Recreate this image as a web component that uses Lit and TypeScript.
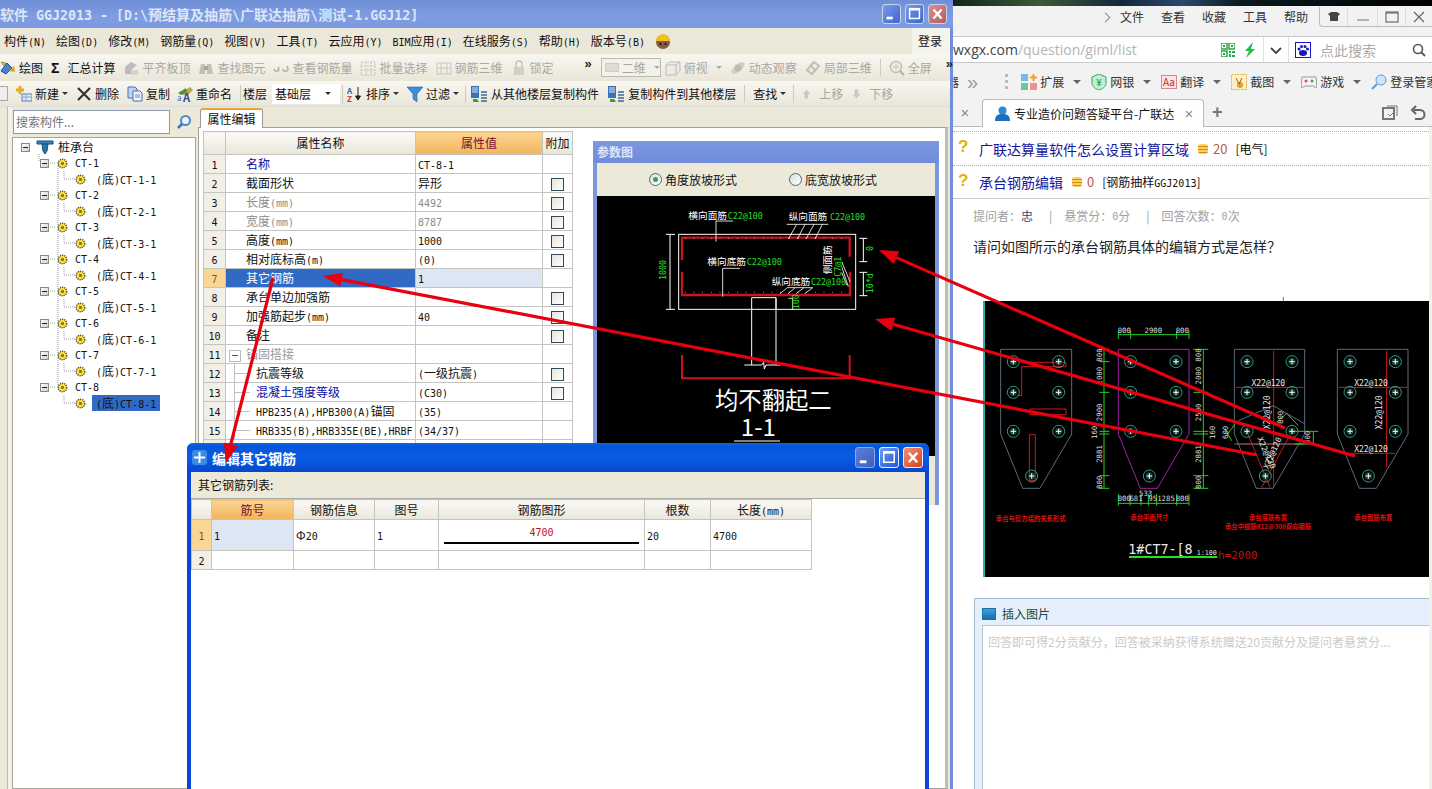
import { LitElement, html, css, svg } from "lit";
import { customElement } from "lit/decorators.js";

const t = (text: string) =>
  text.split(/([\x00-\x7f]+)/).map((s, i) => (i % 2 ? html`<span class="m">${s}</span>` : s));

const I: Record<string, any> = {
  draw: html`<svg class="i" viewBox="0 0 16 16"><path d="M1 11 7 3l5 5-6 6z" fill="#4a7fd0" stroke="#24508f"/><path d="M4 6 1 2l5 1z" fill="#e8c030" stroke="#806010" stroke-width=".6"/><path d="M9 11l5-5 1 6z" fill="#e8a020"/></svg>`,
  align: html`<svg class="i" viewBox="0 0 16 16"><path d="M2 14V7l6-5 6 3-5 4v5z" fill="#bbb"/><rect x="8" y="10" width="7" height="5" fill="#d4d4d0"/></svg>`,
  find: html`<svg class="i" viewBox="0 0 16 16"><path d="M1 14 3 4h4v10zM9 14V4h4l2 10z" fill="#c4c0b0"/><rect x="6" y="6" width="4" height="4" fill="#a8a498"/></svg>`,
  view: html`<svg class="i" viewBox="0 0 16 16"><path d="M1 9c0 3 5 3 5 0M6 7l-1 3M10 9c0 3 5 3 5 0l-1-3" fill="none" stroke="#b4b4ac" stroke-width="1.6"/></svg>`,
  batch: html`<svg class="i" viewBox="0 0 16 16"><path d="M1 2h14v13H1zM1 6h14M1 10h14M6 2v13M11 2v13" fill="none" stroke="#c4c4bc" stroke-dasharray="2 1"/></svg>`,
  three: html`<svg class="i" viewBox="0 0 16 16"><path d="M1 3h14v11H1zM1 8h14M5 3v11M11 3v11" fill="none" stroke="#c8c8c0"/></svg>`,
  lock: html`<svg class="i" viewBox="0 0 16 16"><path d="M5 7V4a3 3 0 0 1 6 0v3" fill="none" stroke="#c0c0b8" stroke-width="1.4"/><rect x="3" y="7" width="10" height="8" fill="#d0d0c8"/></svg>`,
  cube: html`<svg class="i" viewBox="0 0 16 16"><path d="M1 5l4-3h10v9l-4 4H1zM1 5h10v10M11 5l4-3" fill="#ecebe4" stroke="#bdbdb4"/></svg>`,
  orbit: html`<svg class="i" viewBox="0 0 16 16"><ellipse cx="8" cy="8" rx="8" ry="3.6" transform="rotate(-40 8 8)" fill="#d0d0c4"/><circle cx="8" cy="8" r="3.4" fill="#bcbcb0"/></svg>`,
  local: html`<svg class="i" viewBox="0 0 16 16"><path d="M2 10 9 2l5 4-7 8z" fill="none" stroke="#c0c0b6" stroke-width="2"/><path d="M5 5l6 6" stroke="#c0c0b6" stroke-width="2"/></svg>`,
  zoom: html`<svg class="i" viewBox="0 0 16 16"><circle cx="7" cy="7" r="5.5" fill="#eeeee6" stroke="#bcbcb0" stroke-width="1.4"/><path d="M4 7h6M7 4v6" stroke="#c0c0b6"/><path d="M11 11l4 4" stroke="#b0b0a6" stroke-width="2"/></svg>`,
  add: html`<svg class="i" viewBox="0 0 16 16"><rect x="6" y="8" width="10" height="7" fill="#dfe9f6" stroke="#5a80b8"/><path d="M6 11h10M10 8v7" stroke="#8aa8d0"/><path d="M4 0v8M0 4h8" stroke="#e0b020" stroke-width="3"/></svg>`,
  del: html`<svg class="i" viewBox="0 0 16 16"><path d="M2 2l12 12M14 2 2 14" stroke="#333" stroke-width="2.2"/></svg>`,
  copy: html`<svg class="i" viewBox="0 0 16 16"><path d="M1 1h7l2 2v9H1z" fill="#bcd4f0" stroke="#4a70b0"/><path d="M6 5h7l2 2v8H6z" fill="#eef4fc" stroke="#4a70b0"/><path d="M8 9h5M8 11h5" stroke="#6a8ac0"/></svg>`,
  rename: html`<svg class="i" viewBox="0 0 16 16"><path d="M3 8 13 1l3 3-6 6z" fill="#c8a040"/><path d="M1 7 9 2l1 4-6 3z" fill="#4a9050"/><text x="0" y="15" font-size="8" fill="#3a6ab0" font-family="Liberation Sans">a</text><text x="6" y="15.500" font-size="11" font-weight="700" fill="#2a50a0" font-family="Liberation Sans">A</text></svg>`,
  az: html`<svg class="i" viewBox="0 0 16 16"><text x="0" y="7.500" font-size="8" font-weight="700" fill="#2a60b8" font-family="Liberation Sans">A</text><text x="0" y="15.500" font-size="8" font-weight="700" fill="#c04030" font-family="Liberation Sans">Z</text><path d="M11 1v12M8.500 10l2.500 4 2.500-4z" stroke="#222" fill="#222"/></svg>`,
  filter: html`<svg class="i" viewBox="0 0 16 16"><path d="M0 1h16l-6 7v8l-4-3V8z" fill="#3a90d8" stroke="#2468a8" stroke-width=".6"/></svg>`,
  cpfrom: html`<svg class="i i-w" viewBox="0 0 18 17"><rect x="1" y="1" width="8" height="12" fill="#3a70b8"/><path d="M2 3h6M2 5h6M2 7h6" stroke="#dfe9f6"/><path d="M11 7h6M11 10h6M11 13h6M11 16h6" stroke="#3a6a98" stroke-width="1.6"/><path d="M3 14h4l2 3H3z" fill="#30a040"/></svg>`,
  up: html`<svg class="i i-sm" viewBox="0 0 10 12"><path d="M5 1 1 6h2v5h4V6h2z" fill="#ccc8bc"/></svg>`,
  down: html`<svg class="i i-sm" viewBox="0 0 10 12"><path d="M5 11 1 6h2V1h4v5h2z" fill="#ccc8bc"/></svg>`,
};

const gear = html`<svg class="gear" viewBox="0 0 12 12"><circle cx="6" cy="6" r="4.600" fill="#ffe93a" stroke="#444" stroke-width="1.600" stroke-dasharray="1.300 1"/><circle cx="6" cy="6" r="1.800" fill="#8a7a10"/></svg>`;
const exp = html`<span class="exp"></span>`;

const cadDim = (x: number, y: number, label: string, rot = false, col = "#dddddd") =>
  rot
    ? svg`<text x=${x} y=${y} fill=${col} font-size="22" text-anchor="middle" transform="rotate(-90 ${x} ${y})" class="cm">${label}</text>`
    : svg`<text x=${x} y=${y} fill=${col} font-size="22" text-anchor="middle" class="cm">${label}</text>`;

const pile = (x: number, y: number) => svg`
  <circle cx=${x} cy=${y} r="18" fill="none" stroke="#2f9d86" stroke-width="3"/>
  <circle cx=${x} cy=${y} r="11" fill="#1b3d36"/>
  <path d="M${x - 8} ${y}h16M${x} ${y - 8}v16" stroke="#fff" stroke-width="3"/>`;

const pileSet = (a: number, b: number, c: number) =>
  [[a, 203], [b, 203], [a, 295], [b, 295], [a, 412], [b, 412], [c, 546]].map(([x, y]) => pile(x, y));

const outline = (x0: number, w: number, col: string) =>
  svg`<path d="M${x0} 166H${x0 + w}V420L${x0 + w - 95} 583H${x0 + 66}L${x0} 420Z" fill="none" stroke=${col} stroke-width="3"/>`;

const arrow = (x1: number, y1: number, x2: number, y2: number) => {
  const a = Math.atan2(y2 - y1, x2 - x1);
  const L = 19, W = 7;
  const bx = x2 - L * Math.cos(a), by = y2 - L * Math.sin(a);
  const px = W * Math.sin(a), py = -W * Math.cos(a);
  return svg`<line x1=${x1} y1=${y1} x2=${bx} y2=${by} stroke="#e8000e" stroke-width="3.200"/>
    <polygon points="${x2},${y2} ${bx + px},${by + py} ${bx - px},${by - py}" fill="#e8000e"/>`;
};

const winBtns = (cls: string) => html`
  <div class="wbtns ${cls}">
    <span class="wb"><svg viewBox="0 0 19 20"><rect x="4" y="13" width="7" height="3" fill="#fff"/></svg></span>
    <span class="wb"><svg viewBox="0 0 19 20"><rect x="4" y="4" width="11" height="11" fill="none" stroke="#fff" stroke-width="1.600"/><rect x="4" y="3.500" width="11" height="2.500" fill="#fff"/></svg></span>
    <span class="wb close"><svg viewBox="0 0 19 20"><path d="M5 5l9 10M14 5 5 15" stroke="#fff" stroke-width="2.600"/></svg></span>
  </div>`;

@customElement("app-root")
export class AppRoot extends LitElement {
  static styles = css`
    :host { display: block; width: 1432px; height: 789px; overflow: hidden; }
    * { box-sizing: border-box; }
    .desk { position: relative; width: 1432px; height: 789px; overflow: hidden; background: #fff;
      font: 12px/16px "Noto Sans CJK SC", "Liberation Sans", sans-serif; color: #111; white-space: nowrap; }
    .m { font: 10px "DejaVu Sans Mono", monospace; white-space: pre; }
    .i { width: 16px; height: 16px; flex: none; display: block; }
    .i-sm { width: 9px; height: 12px; }
    .i-w { width: 18px; height: 17px; }
    .gap2 { width: 2px; flex: none; } .gap4 { width: 4px; flex: none; } .gap6 { width: 6px; flex: none; }
    .gap7 { width: 7px; flex: none; } .gap8 { width: 8px; flex: none; } .gap9 { width: 9px; flex: none; }

    /* main window */
    .main { position: absolute; left: 0; top: 0; width: 953px; height: 789px; display: flex; flex-direction: column;
      background: #ece9d8; border-right: 3px solid #6f8edb; }
    .title { height: 28px; flex: none; display: flex; align-items: center;
      background: linear-gradient(#6e8ed6, #7f9de2 60%, #7b99e0); color: #dde5f6; font-weight: 700; font-size: 14px; margin-right: -3px; padding-right: 6px; }
    .title .m { font: 700 13.300px "DejaVu Sans Mono", monospace; }
    .wbtns { display: flex; gap: 4px; margin-left: auto; }
    .wb { width: 19px; height: 20px; display: block; border: 1px solid #c8d4f0; border-radius: 3px;
      background: linear-gradient(135deg, #7c9ae8, #3a66d0); }
    .wb svg { width: 100%; height: 100%; display: block; }
    .wb.close { background: linear-gradient(135deg, #d99090, #b85a5a); }
    .wbtns.hot .wb { border-color: #e8eefc; width: 20px; height: 21px; background: linear-gradient(135deg, #6f9cf0, #2257d8); }
    .wbtns.hot .wb:first-child { background: linear-gradient(135deg, #5c80d8, #3c60c0); border-color: #8ca8e8; }
    .wbtns.hot .wb.close { background: linear-gradient(135deg, #f09070, #d84020); }
    .menu { height: 26px; flex: none; display: flex; align-items: center; gap: 10px; padding-left: 4px; background: #ebe8d9; }
    .hat { width: 16px; height: 16px; flex: none; }
    .login { margin-left: auto; align-self: stretch; display: flex; align-items: center; background: #f4f3ec; padding: 0 8px 0 6px; }
    .tb { display: flex; align-items: center; flex: none; background: linear-gradient(#f8f7f1, #e9e6d8); }
    .tb1 { height: 27px; gap: 8px; color: #aaa89e; }
    .tb1 .on { color: #111; }
    .tb2 { height: 26px; border-bottom: 1px solid #ddd; }
    .tool { display: flex; align-items: center; gap: 3px; }
    .sigma { font: 700 14px "Liberation Sans", sans-serif; width: 10px; text-align: center; color: #111; }
    .more { font: 700 13px/13px "Liberation Sans", sans-serif; color: #222; padding-bottom: 8px; }
    .more.first { margin-left: 23px; }
    .more.last { margin-left: 6px; }
    .combo { width: 62px; height: 19px; border: 1px solid #bdbbb0; background: #f2f1ea; display: flex; align-items: center; padding-left: 3px; gap: 3px; color: #aaa89e; margin: 0 -4px 0 1px; }
    .combo i { width: 14px; height: 9px; background: #dedcd0; border: 1px solid #ccc; }
    .caret { width: 0; height: 0; border: 3px solid transparent; border-top: 3px solid #333; border-bottom: 0; flex: none; }
    .caret.dim { border-top-color: #aaa; }
    .combo .caret, .tb1 .tool .caret { margin-left: 5px; }
    .sep { width: 1px; height: 18px; background: #cfccbd; flex: none; }
    .tb2 .tool { color: #111; }
    .tb2 .tool.gray { color: #a8a69c; }
    .collapse { width: 8px; height: 15px; border: 1px solid #aaa; border-left: 0; background: #eee; margin-right: 8px; flex: none; }
    .floor { width: 68px; height: 20px; background: #fff; display: flex; align-items: center; padding-left: 3px; margin: 0 2px 0 5px; }
    .floor .caret { margin-left: auto; margin-right: 9px; }

    .body { flex: 1; display: flex; min-height: 0; }
    .strip { width: 12px; flex: none; border-left: 0; background: linear-gradient(90deg, #ece9d8 7px, #bbb 7px, #bbb 8px, #f3f1e8 8px); }
    .side { width: 184px; flex: none; display: flex; flex-direction: column; }
    .search { height: 30px; display: flex; align-items: center; gap: 6px; padding-left: 1px; }
    .search .box { width: 157px; height: 24px; border: 1px solid #8b9bae; background: #fff; color: #777; padding-left: 2px; display: flex; align-items: center; }
    .search svg { width: 16px; height: 16px; }
    .tree { flex: 1; position: relative; background: #fff; border: 1px solid #a5a5a0; padding-top: 1px; }
    .lines { position: absolute; left: 0; top: 0; width: 182px; height: 300px; }
    .node { height: 16px; display: flex; align-items: center; position: relative; }
    .exp { width: 9px; height: 9px; border: 1px solid #888; background: linear-gradient(135deg, #fff, #cfcfc4); position: relative; flex: none; display: block; }
    .exp::after { content: ""; position: absolute; left: 1px; right: 1px; top: 3px; height: 1px; background: #222; }
    .node.root { padding-left: 8px; }
    .node.root svg { width: 18px; height: 15px; margin: 0 4px 0 6px; flex: none; }
    .node.l1 { padding-left: 27px; }
    .gear { width: 11px; height: 11px; flex: none; display: block; }
    .node.l1 .gear { margin: 0 7px 0 8px; }
    .node.l2 { padding-left: 62px; }
    .node.l2 .lab { margin-left: 6px; padding: 0 4px; height: 16px; line-height: 16px; }
    .node.sel .lab { background: #316ac5; color: #111; }

    .pane { flex: 1; display: flex; flex-direction: column; margin-left: 2px; min-width: 0; }
    .tabs { height: 20px; flex: none; padding-left: 2px; display: flex; align-items: flex-end; }
    .tab { height: 20px; width: 63px; background: #fff; border: 1px solid #9a9a90; border-top: 2px solid #f0a030; border-bottom: 0; border-radius: 3px 3px 0 0; display: flex; align-items: center; justify-content: center; position: relative; z-index: 1; margin-bottom: -1px; }
    .paneBody { flex: 1; background: #fff; border: 1px solid #a0a098; border-right: 3px solid #bdbdb4; margin-right: 2px; padding: 3px 0 0 4px; }
    table { border-collapse: collapse; table-layout: fixed; background: #fff; }
    td, th { border: 1px solid #c4c4c0; padding: 0; font-weight: 400; overflow: hidden; }
    .props { width: 370px; }
    .props th, .gridT th { background: linear-gradient(#fbfaf6, #e9e6d9); }
    .props th.act, .gridT th.act { background: linear-gradient(#fbd594, #f2b45a); color: #7a1030; }
    .props tr { height: 19px; }
    .props tr.hd { height: 23px; }
    .props th:nth-child(1) { width: 22px; } .props th:nth-child(2) { width: 190px; }
    .props th:nth-child(3) { width: 127px; } .props th:nth-child(4) { width: 30px; }
    td.n { background: #f1efe6; text-align: center; }
    td.n.on { background: #fbd594; color: #9a4a10; }
    td.k { padding-left: 20px; }
    td.k.sub { padding-left: 30px; position: relative; }
    td.k.sub::before { content: ""; position: absolute; left: 8px; width: 16px; top: 9px; height: 1px; background: #c0c0c0; }
    td.k.sub::after { content: ""; position: absolute; left: 8px; width: 1px; top: -1px; bottom: -1px; background: #c0c0c0; }
    td.k.group { padding-left: 3px; color: #999; }
    td.k.group .box { display: inline-block; vertical-align: middle; width: 12px; height: 12px; border: 1px solid #bbb; margin-right: 5px; position: relative; }
    td.k.group .box::after { content: ""; position: absolute; left: 2px; right: 2px; top: 4px; height: 1px; background: #555; }
    td.v { padding-left: 2px; }
    .blue { color: #0a0aa8; }
    .gray { color: #8c8c8c; }
    td.k.selK { background: #316ac5; color: #fff; }
    td.v.selV { background: #dde7f4; }
    td.c { text-align: center; }
    .chk { display: inline-block; width: 13px; height: 13px; border: 1px solid #2f4a58; background: linear-gradient(135deg, #e4e4dc, #fff); vertical-align: middle; }

    /* parameter window */
    .param { position: absolute; left: 593px; top: 141px; width: 346px; height: 364px; display: flex; flex-direction: column;
      background: #7b97de; padding: 0 4px 0 4px; }
    .ptitle { height: 22px; flex: none; color: #dfe6f6; font-weight: 700; display: flex; align-items: center; background: linear-gradient(#7c98e0, #6e8cd8); margin: 0 -4px; padding-left: 4px; }
    .popts { height: 33px; flex: none; background: #ece9d8; display: flex; align-items: center; justify-content: flex-start; padding-left: 52px; }
    .radio { width: 13px; height: 13px; border-radius: 50%; border: 1px solid #4a6a80; background: linear-gradient(135deg, #ddd, #fff); flex: none; position: relative; margin-right: 3px; }
    .radio.on::after { content: ""; position: absolute; left: 3px; top: 3px; width: 5px; height: 5px; border-radius: 50%; background: #45a045; }
    .popts .gap { width: 52px; }
    .pdraw { width: 338px; height: 260px; display: block; background: #000; flex: none; }
    .prest { flex: 1; background: #ece9d8; }
    svg text { font-family: "Noto Sans CJK SC", sans-serif; }
    svg text.cm { font-family: "DejaVu Sans Mono", monospace; }

    /* dialog */
    .dlg { position: absolute; left: 187px; top: 443px; width: 742px; height: 346px; display: flex; flex-direction: column;
      background: #0848d8; padding: 0 4px; border-radius: 6px 6px 0 0; }
    .dtitle { height: 29px; flex: none; display: flex; align-items: center; margin: 0 -4px; padding: 0 6px 0 5px; gap: 5px; color: #fff; font-weight: 700; font-size: 14px;
      border-radius: 6px 6px 0 0; background: linear-gradient(#0a68ea, #0455d8 12%, #0a5ce4 50%, #0448cc); }
    .dtitle .ico { width: 15px; height: 15px; flex: none; }
    .dbar { height: 27px; flex: none; background: #ece9d8; border-bottom: 1px solid #aaa; display: flex; align-items: center; padding-left: 7px; }
    .dbody { flex: 1; background: #fff; }
    .gridT { width: 620px; }
    .gridT tr.hd { height: 20px; }
    .gridT tr.r1 { height: 31px; }
    .gridT tr.r2 { height: 19px; }
    .gridT th:nth-child(1) { width: 20px; } .gridT th:nth-child(2) { width: 82px; }
    .gridT th:nth-child(3) { width: 81px; } .gridT th:nth-child(4) { width: 64px; }
    .gridT th:nth-child(5) { width: 206px; } .gridT th:nth-child(6) { width: 66px; }
    .gridT th:nth-child(7) { width: 101px; }
    .gridT td.v { padding-left: 2px; }
    .gridT .act2 { background: #dde7f4; }
    .shape { height: 30px; display: flex; flex-direction: column; align-items: center; padding: 0 5px; }
    .shape .len { color: #c01020; height: 22px; line-height: 22px; }
    .shape .bar { height: 2px; background: #000; align-self: stretch; }

    /* browser */
    .br { position: absolute; left: 953px; top: 0; width: 479px; height: 789px; display: flex; flex-direction: column; background: #fff; }
    .wall { height: 6px; flex: none; background: linear-gradient(90deg, #12241a, #3a5a38 18%, #14283c 35%, #2a4a6a 48%, #0a1a20 60%, #000 100%); }
    .bmenu { height: 30px; flex: none; background: #f2f2f2; display: flex; align-items: flex-start; }
    .bmenu .labs { display: flex; gap: 17px; margin: 0 11px 0 11px; color: #333; height: 22px; align-items: center; }
    .bmenu .arr { width: 7px; height: 7px; border-top: 1px solid #888; border-right: 1px solid #888; transform: rotate(45deg); margin: 8px 0 0 149px; flex: none; }
    .bwin { display: flex; height: 20px; border: 1px solid #bbb; border-top: 0; border-right: 0; border-radius: 0 0 0 4px; margin-top: 1px; flex: 1; }
    .bwin span { display: flex; align-items: center; justify-content: center; border-right: 1px solid #ddd; }
    .bwin span:nth-child(1) { width: 28px; } .bwin span:nth-child(2) { width: 30px; } .bwin span:nth-child(3) { width: 28px; }
    .bwin span:nth-child(4) { flex: 1; border: 0; }
    .bwin svg { width: 14px; height: 14px; display: block; }
    .baddr { height: 27px; flex: none; display: flex; align-items: center; background: #fff; border-top: 1px solid #c8c8c8; border-bottom: 1px solid #c8c8c8; }
    .url { font: 14px "Open Sans", "Liberation Sans", sans-serif; color: #444; }
    .url em { font-style: normal; color: #b4b4b4; }
    .baddr .qr { width: 14px; height: 14px; margin-left: auto; flex: none; }
    .baddr .bolt { width: 14px; height: 16px; margin: 0 6px 0 8px; flex: none; }
    .vline { width: 1px; align-self: stretch; background: #e0e0e0; flex: none; }
    .chev { width: 14px; height: 14px; margin: 0 5px; flex: none; }
    .paw { width: 16px; height: 16px; margin: 0 2px 0 6px; flex: none; }
    .srch { color: #aaa; font-size: 14px; width: 92px; margin-left: 7px; }
    .mag { width: 14px; height: 14px; margin-right: 6px; flex: none; }
    .btool { height: 37px; flex: none; background: #f2f2f2; display: flex; align-items: center; color: #333; overflow: hidden; }
    .bcut { width: 6px; overflow: hidden; direction: rtl; flex: none; }
    .chevs { color: #999; margin-left: 8px; font: 20px/20px "Liberation Sans", sans-serif; }
    .grip { width: 3px; height: 16px; margin: 0 13px 0 27px; background: repeating-linear-gradient(#bbb 0 3px, transparent 3px 6px); flex: none; }
    .bt { display: flex; align-items: center; gap: 3px; flex: none; margin-right: 10px; }
    .bt .caret { margin-left: 6px; border-top-color: #666; border-width: 4px; border-top-width: 4px; border-bottom: 0; }
    .bt svg { width: 16px; height: 16px; flex: none; display: block; }
    .btabs { height: 27px; flex: none; background: #f2f2f2; display: flex; align-items: flex-end; border-bottom: 1px solid #bbb; position: relative; }
    .x { color: #888; font: 15px "Liberation Sans", sans-serif; width: 12px; text-align: center; }
    .btabs > .x { margin: 0 11px 5px 6px; align-self: flex-end; }
    .btab { width: 222px; height: 28px; background: #fff; border: 1px solid #b8b8b8; border-bottom: 0; border-radius: 4px 4px 0 0; display: flex; align-items: center; padding-left: 12px; margin-bottom: -1px; }
    .btab svg { width: 15px; height: 15px; flex: none; margin-right: 4px; }
    .btab .lab { width: 167px; overflow: hidden; }
    .btab .x { margin-left: 2px; }
    .plus { font: 700 18px "Liberation Sans", sans-serif; color: #777; margin: 0 auto 3px 8px; }
    .btabs .r { width: 16px; height: 16px; margin: 0 6px 5px 6px; flex: none; display: block; }
    .bbody { flex: 1; min-height: 0; padding-top: 4px; display: flex; flex-direction: column; border-right: 3px solid #f2f0ec; }
    .q { height: 34px; border-top: 1px dotted #b0b0b0; display: flex; align-items: center; padding-left: 5px; }
    .q .qm { font: 700 17px "Liberation Sans", sans-serif; color: #e0b010; width: 21px; margin-top: -3px; }
    .q a { font-size: 14px; color: #1616a0; }
    .coin { width: 10px; height: 10px; margin: 0 5px 0 9px; border-radius: 3px; background: repeating-linear-gradient(#f8d060 0 2px, #d88a10 2px 3px); flex: none; }
    .pts { color: #b85a50; font-size: 13px; margin-right: 8px; }
    .cat { font-size: 12px; }
    .qsolid { border-bottom: 1px solid #c8c8c8; height: 34px; }
    .meta { height: 34px; flex: none; display: flex; align-items: center; padding-left: 20px; color: #a0a0a0; }
    .meta b { color: #2a4a7a; font-weight: 400; }
    .meta .bar { margin: 0 12px 0 16px; }
    .ask { font-size: 14px; color: #222; padding-left: 20px; height: 26px; line-height: 26px; flex: none; }
    .pic { display: block; width: 446px; height: 280px; margin: 38px 0 0 30px; flex: none; background: #000; }
    .ed { margin: 21px 0 0 21px; flex: 1; background: #e3f0fc; border-top: 1px solid #a8bcd0; border-left: 1px solid #a8bcd0; padding-left: 7px; display: flex; flex-direction: column; }
    .edh { height: 26px; flex: none; display: flex; align-items: center; gap: 6px; color: #244; padding-top: 4px; }
    .edh i { width: 14px; height: 12px; background: linear-gradient(#3aa4e0, #1a6ea8); border: 1px solid #1a70a8; display: block; }
    .eda { flex: 1; background: #fff; border: 1px solid #b4c4d4; border-right: 0; border-bottom: 0; padding: 8px 5px; color: #cacaca; }

    .arrows { position: absolute; left: 0; top: 0; width: 1432px; height: 789px; pointer-events: none; }
  `;

  tree() {
    const lines: string[] = ["M45 24V250", "M26 16V24"];
    for (let i = 0; i < 8; i++) {
      const y = 25 + i * 32;
      lines.push(`M33 ${y}h9`, `M51 ${y + 8}v8h12`);
    }
    const nodes = [];
    for (let i = 1; i <= 8; i++) {
      nodes.push(html`<div class="node l1">${exp}${gear}<span class="m">CT-${i}</span></div>`);
      nodes.push(html`<div class="node l2 ${i === 8 ? "sel" : ""}">${gear}<span class="lab">${t(`(底)CT-${i}-1`)}</span></div>`);
    }
    return html`<div class="tree">
      <svg class="lines" viewBox="0 0 182 300"><path d=${lines.join("")} fill="none" stroke="#999" stroke-dasharray="1 1"/></svg>
      <div class="node root">${exp}<svg viewBox="0 0 18 15"><path d="M1 1h16v3H1z" fill="#3a8ab8" stroke="#1a4a78"/><path d="M6 4h6l-1 7-2 3-2-3z" fill="#2a7aa8" stroke="#1a4a78"/></svg>桩承台</div>
      ${nodes}
    </div>`;
  }

  props() {
    const rows: [string, string, string, boolean, string?][] = [
      ["名称", "CT-8-1", "blue", false],
      ["截面形状", "异形", "", true],
      ["长度(mm)", "4492", "gray", true],
      ["宽度(mm)", "8787", "gray", true],
      ["高度(mm)", "1000", "", true],
      ["相对底标高(m)", "(0)", "", true],
      ["其它钢筋", "1", "sel", false],
      ["承台单边加强筋", "", "", true],
      ["加强筋起步(mm)", "40", "", true],
      ["备注", "", "", true],
      ["锚固搭接", "", "group", false],
      ["抗震等级", "(一级抗震)", "sub", true],
      ["混凝土强度等级", "(C30)", "sub blue", true],
      ["HPB235(A),HPB300(A)锚固", "(35)", "sub", false],
      ["HRB335(B),HRB335E(BE),HRBF", "(34/37)", "sub", false],
      ["", "", "", false],
    ];
    return html`<table class="props">
      <tr class="hd"><th></th><th>属性名称</th><th class="act">属性值</th><th>附加</th></tr>
      ${rows.map(([k, v, c, chk], i) => {
        const sel = c === "sel", gray = c === "gray", grp = c === "group";
        return html`<tr>
          <td class="n ${sel ? "on" : ""}">${i < 15 ? t(String(i + 1)) : ""}</td>
          <td class="k ${c.includes("sub") ? "sub" : ""} ${c.includes("blue") ? "blue" : ""} ${gray ? "gray" : ""} ${grp ? "group" : ""} ${sel ? "selK" : ""}">${grp ? html`<span class="box"></span>` : ""}${t(k)}</td>
          <td class="v ${gray ? "gray" : ""} ${sel ? "selV" : ""}">${t(v)}</td>
          <td class="c">${chk ? html`<span class="chk"></span>` : ""}</td>
        </tr>`;
      })}
    </table>`;
  }

  drawing() {
    const w = "#fff", g = "#22e022", r = "#c8141e";
    return html`<svg class="pdraw" viewBox="21 183 1014 780">
      <rect x="266" y="298" width="531" height="225" fill="none" stroke=${w} stroke-width="3"/>
      <path d="M276 375V308H779V365M276 410V480H780V410" fill="none" stroke=${r} stroke-width="7"/>
      <path d="M285 310H770M285 472H770" stroke=${w} stroke-width="2.500" stroke-dasharray="2 24"/>
      <path d="M485 523V488H558V523M485 523V690M558 488V690M463 690H515l6-8 2 20 5-12h44" fill="none" stroke=${w} stroke-width="3"/>
      <path d="M276 660V730H779V660" fill="none" stroke=${r} stroke-width="6"/>
      <path d="M240 298V523M228 298H255M228 523H255" fill="none" stroke=${w} stroke-width="3"/>
      <path d="M820 310V380M808 310H832M808 380H832M820 412V482M808 412H832M808 482H832" fill="none" stroke=${w} stroke-width="3"/>
      <path d="M378 258H430M378 258V320M398 400H450M398 400V485M590 268H715M595 312 620 268M622 312 645 268M648 312 672 268M675 312 697 268M570 476 592 458H668M594 476 616 458M618 476 642 458M644 476 668 458M595 490H608V523M755 380 780 440M755 395 775 455M755 412 770 450" fill="none" stroke=${w} stroke-width="2.500"/>
      <text x="295" y="252" fill=${w} font-size="29">横向面筋</text>
      <text x="413" y="252" fill=${g} font-size="25" class="cm">C22@100</text>
      <text x="596" y="255" fill=${w} font-size="29">纵向面筋</text>
      <text x="720" y="255" fill=${g} font-size="25" class="cm">C22@100</text>
      <text x="352" y="390" fill=${w} font-size="29">横向底筋</text>
      <text x="470" y="390" fill=${g} font-size="25" class="cm">C22@100</text>
      <text x="545" y="450" fill=${w} font-size="29">纵向底筋</text>
      <text x="663" y="450" fill=${g} font-size="25" class="cm">C22@100</text>
      <text x="723" y="418" fill=${w} font-size="29" transform="rotate(-90 723 418)">侧面筋</text>
      <text x="752" y="425" fill=${g} font-size="25" class="cm" transform="rotate(-90 752 425)">C7@1</text>
      <text x="228" y="435" fill=${g} font-size="25" class="cm" transform="rotate(-90 228 435)">1000</text>
      <text x="848" y="348" fill=${g} font-size="25" class="cm" transform="rotate(-90 848 348)">0</text>
      <text x="848" y="475" fill=${g} font-size="25" class="cm" transform="rotate(-90 848 475)">10*d</text>
      <text x="628" y="523" fill=${g} font-size="25" class="cm" transform="rotate(-90 628 523)">100</text>
      <text x="550" y="822" fill=${w} font-size="70" text-anchor="middle">均不翻起二</text>
      <text x="505" y="904" fill=${w} font-size="72" text-anchor="middle">1-1</text>
      <path d="M432 918H570" stroke=${w} stroke-width="3"/>
    </svg>`;
  }

  pic() {
    const pg = "#5a6c7c", rd = "#d01818", gn = "#22d022", lab = "#e01010";
    return html`<svg class="pic" viewBox="9 9 1338 840">
      <rect x="9" y="9" width="1338" height="12" fill="#fff"/>
      <path d="M910 9V21" stroke="#777" stroke-width="3"/>
      <path d="M12 21V849" stroke="#30d0d8" stroke-width="5"/>
      ${outline(62, 213, pg)}${outline(415, 212, "#a020a8")}${outline(763, 211, pg)}${outline(1072, 212, pg)}
      <path d="M125 205H258V218H125V305H112M150 345H258V362H150ZM148 422H166V560H148Z" fill="none" stroke=${rd} stroke-width="3"/>
      <path d="M881 170V580M768 280H970M800 412 870 580M936 412 845 580M770 450H970" fill="none" stroke=${rd} stroke-width="3"/>
      <path d="M763 450H974M775 380 880 335 975 390" fill="none" stroke=${pg} stroke-width="3"/>
      <path d="M1220 170V520M1076 280H1282M1085 478H1245" fill="none" stroke=${rd} stroke-width="3"/>
      ${pileSet(100, 236, 155)}${pileSet(452, 588, 508)}${pileSet(801, 936, 856)}${pileSet(1110, 1246, 1165)}
      <path d="M415 122H627M415 110V135M452 110V135M590 110V135M627 110V135M372 166V583M358 166H388M358 203H388M358 295H388M358 412H388M358 420H388M358 545H388M358 583H388M670 166V583M640 166H685M640 295H685M640 412H685M640 420H685M640 545H685M640 583H685M415 628H627M415 600V635M450 600V635M483 600V635M505 600V635M530 600V635M590 600V635M627 600V635M740 425 765 390M735 405 755 440M920 358 955 395M890 385 920 358M945 412H1015M945 450H1005M1000 412V450" fill="none" stroke=${gn} stroke-width="3"/>
      ${cadDim(433, 118, "800")}${cadDim(520, 118, "2900")}${cadDim(607, 118, "800")}
      ${cadDim(366, 183, "800", true)}${cadDim(366, 245, "2000", true)}${cadDim(366, 355, "2900", true)}${cadDim(352, 415, "160", true)}${cadDim(366, 480, "2881", true)}${cadDim(366, 565, "800", true)}
      ${cadDim(664, 183, "800", true)}${cadDim(664, 245, "2000", true)}${cadDim(664, 355, "2500", true)}${cadDim(705, 415, "160", true)}${cadDim(664, 480, "2881", true)}${cadDim(664, 565, "800", true)}
      ${cadDim(433, 620, "800")}${cadDim(468, 620, "681")}${cadDim(497, 606, "533")}${cadDim(518, 620, "95")}${cadDim(558, 620, "1285")}${cadDim(607, 620, "800")}
      ${cadDim(908, 370, "800", true)}${cadDim(745, 415, "600", true)}${cadDim(990, 430, "300", true)}
      <text x="865" y="276" fill="#e8e8e8" font-size="24" text-anchor="middle" class="cm">X22@120</text>
      <text x="1173" y="276" fill="#e8e8e8" font-size="24" text-anchor="middle" class="cm">X22@120</text>
      <text x="1173" y="474" fill="#e8e8e8" font-size="24" text-anchor="middle" class="cm">X22@120</text>
      <text x="1206" y="355" fill="#e8e8e8" font-size="24" text-anchor="middle" class="cm" transform="rotate(-90 1206 355)">X22@120</text>
      <text x="870" y="355" fill="#e8e8e8" font-size="24" text-anchor="middle" class="cm" transform="rotate(-90 870 355)">X22@120</text>
      <text x="852" y="480" fill="#e8e8e8" font-size="24" text-anchor="middle" class="cm" transform="rotate(66 852 480)">X22@120</text>
      <text x="885" y="480" fill="#e8e8e8" font-size="24" text-anchor="middle" class="cm" transform="rotate(-66 885 480)">X22@120</text>
      <text x="152" y="680" fill=${lab} font-size="19" text-anchor="middle" font-weight="700">承台与剪力墙的关系形式</text>
      <text x="508" y="678" fill=${lab} font-size="19" text-anchor="middle" font-weight="700">承台平面尺寸</text>
      <text x="864" y="678" fill=${lab} font-size="19" text-anchor="middle" font-weight="700">承台底筋布置</text>
      <text x="864" y="706" fill=${lab} font-size="19" text-anchor="middle" font-weight="700">承台中部筋X12@300双向钢筋</text>
      <text x="1180" y="678" fill=${lab} font-size="19" text-anchor="middle" font-weight="700">承台面筋布置</text>
      <text x="445" y="780" fill="#e8e8e8" font-size="40" class="cm">1#CT7-[8</text>
      <text x="650" y="782" fill="#e8e8e8" font-size="20" class="cm">1:100</text>
      <path d="M447 789H712" stroke="#22e022" stroke-width="6"/>
      <text x="714" y="794" fill="#b01818" font-size="33" class="cm">h=2000</text>
    </svg>`;
  }

  browser() {
    const bt = (ico: any, label: string) => html`<div class="bt">${ico}<span>${label}</span><span class="caret"></span></div>`;
    return html`<div class="br">
      <div class="wall"></div>
      <div class="bmenu">
        <span class="arr"></span>
        <div class="labs"><span>文件</span><span>查看</span><span>收藏</span><span>工具</span><span>帮助</span></div>
        <div class="bwin">
          <span><svg viewBox="0 0 14 14"><path d="M1 4l3-2h6l3 2-2 2v5H3V6z" fill="#444"/></svg></span>
          <span><svg viewBox="0 0 14 14"><path d="M1 10H13" stroke="#777"/></svg></span>
          <span><svg viewBox="0 0 14 14"><rect x="1" y="2" width="12" height="10" fill="none" stroke="#555"/><path d="M1 3h12" stroke="#555"/></svg></span>
          <span><svg viewBox="0 0 14 14"><path d="M2 2l10 10M12 2 2 12" stroke="#666" stroke-width="1.200"/></svg></span>
        </div>
      </div>
      <div class="baddr">
        <span class="url">wxgx.com<em>/question/giml/list</em></span>
        <svg class="qr" viewBox="0 0 14 14"><path d="M0 0h6v6H0zM8 0h6v6H8zM0 8h6v6H0z" fill="none" stroke="#2aa84a" stroke-width="1.500"/><path d="M2 2h2v2H2zM10 2h2v2h-2zM2 10h2v2H2zM8 8h2v2H8zM11 8h3v2h-3zM8 11h2v3H8zM11 12h3v2h-3z" fill="#2aa84a"/></svg>
        <svg class="bolt" viewBox="0 0 14 16"><path d="M10 0 2 9h4L3 16l9-9H8z" fill="#28b850"/></svg>
        <span class="vline"></span>
        <svg class="chev" viewBox="0 0 14 14"><path d="M2 5l5 5 5-5" fill="none" stroke="#444" stroke-width="1.800"/></svg>
        <span class="vline"></span>
        <svg class="paw" viewBox="0 0 16 16"><rect width="16" height="16" fill="#fff" stroke="#1414c8" stroke-width="2"/><ellipse cx="8" cy="11" rx="4" ry="3" fill="#1414c8"/><circle cx="4" cy="7" r="1.500" fill="#1414c8"/><circle cx="6.500" cy="4.500" r="1.500" fill="#1414c8"/><circle cx="10" cy="4.500" r="1.500" fill="#1414c8"/><circle cx="12.500" cy="7" r="1.500" fill="#1414c8"/></svg>
        <span class="srch">点此搜索</span>
        <svg class="mag" viewBox="0 0 14 14"><circle cx="6" cy="6" r="4.500" fill="none" stroke="#555" stroke-width="1.600"/><path d="M9 9l4 4" stroke="#555" stroke-width="1.800"/></svg>
      </div>
      <div class="btool">
        <span class="bcut">器</span><span class="chevs">»</span><span class="grip"></span>
        ${bt(html`<svg viewBox="0 0 16 16"><rect x="0" y="0" width="7" height="7" fill="#7ab8ea"/><rect x="0" y="9" width="7" height="7" fill="#6cc898"/><rect x="9" y="9" width="7" height="7" fill="#f09090"/><path d="M12.500 0v7M9 3.500h7" stroke="#f0a030" stroke-width="2"/></svg>`, "扩展")}
        ${bt(html`<svg viewBox="0 0 16 16"><path d="M8 0 15 3v6c0 4-4 6-7 7-3-1-7-3-7-7V3z" fill="#bff0d0" stroke="#30a868"/><text x="8" y="12" font-size="10" text-anchor="middle" fill="#1a8850" font-family="Liberation Sans">¥</text></svg>`, "网银")}
        ${bt(html`<svg viewBox="0 0 16 16"><rect x=".5" y="1.500" width="15" height="13" fill="#fbe4e4" stroke="#d88"/><text x="8" y="12" font-size="10" text-anchor="middle" fill="#c03030" font-family="Liberation Sans">Aa</text></svg>`, "翻译")}
        ${bt(html`<svg viewBox="0 0 16 16"><rect x=".5" y=".5" width="15" height="15" fill="#fdf0cc" stroke="#e0b040" stroke-dasharray="2 1"/><circle cx="9" cy="11" r="3" fill="#e8a020"/><path d="M5 4l3 6 3-6" fill="none" stroke="#a06010"/></svg>`, "截图")}
        ${bt(html`<svg viewBox="0 0 16 16"><path d="M1 3h14l1 11-4-2H4l-4 2z" fill="#f4f4f4" stroke="#999"/><circle cx="5" cy="7" r="1.500" fill="#e05050"/><circle cx="11" cy="7" r="1.500" fill="#50a050"/></svg>`, "游戏")}
        <div class="bt"><svg viewBox="0 0 16 16"><circle cx="10" cy="6" r="5" fill="#cfe4f8" stroke="#5a9ad8"/><path d="M6 10 1 15" stroke="#5a9ad8" stroke-width="2"/></svg><span>登录管家</span></div>
      </div>
      <div class="btabs">
        <span class="x">×</span>
        <div class="btab">
          <svg viewBox="0 0 15 15"><circle cx="7.500" cy="4.500" r="4" fill="#2a8ad8"/><path d="M0 15c0-6 3-7 7.500-7S15 9 15 15z" fill="#1a70c0"/></svg>
          <span class="lab">专业造价问题答疑平台-广联达</span><span class="x">×</span>
        </div>
        <span class="plus">+</span>
        <svg class="r" viewBox="0 0 16 16"><path d="M1 3h11v11H1z" fill="none" stroke="#777" stroke-width="2"/><path d="M5 1h10v10" fill="none" stroke="#777"/><path d="M6 9l2 2 3-3" fill="none" stroke="#777"/></svg>
        <svg class="r" viewBox="0 0 16 16"><path d="M4 5h6a4 4 0 0 1 0 9H5" fill="none" stroke="#666" stroke-width="2"/><path d="M6 1 2 5l4 4" fill="none" stroke="#666" stroke-width="2"/></svg>
      </div>
      <div class="bbody">
        <div class="q"><span class="qm">?</span><a>广联达算量软件怎么设置计算区域</a><span class="coin"></span><span class="pts">20</span><span class="cat">[电气]</span></div>
        <div class="q qsolid"><span class="qm">?</span><a>承台钢筋编辑</a><span class="coin"></span><span class="pts">0</span><span class="cat">[钢筋抽样${t("GGJ2013")}]</span></div>
        <div class="meta">提问者：<b>忠</b><span class="bar">|</span>${t("悬赏分：0分")}<span class="bar">|</span>${t("回答次数：0次")}</div>
        <div class="ask">请问如图所示的承台钢筋具体的编辑方式是怎样？</div>
        ${this.pic()}
        <div class="ed">
          <div class="edh"><i></i>插入图片</div>
          <div class="eda">回答即可得2分贡献分，回答被采纳获得系统赠送20贡献分及提问者悬赏分...</div>
        </div>
      </div>
    </div>`;
  }

  render() {
    const dis = (ico: any, label: string) => html`<div class="tool">${ico}<span>${label}</span></div>`;
    const on = (ico: any, label: string, caret = false) =>
      html`<div class="tool">${ico}<span>${label}</span>${caret ? html`<span class="caret"></span>` : ""}</div>`;
    const menu = ["构件(N)", "绘图(D)", "修改(M)", "钢筋量(Q)", "视图(V)", "工具(T)", "云应用(Y)", "BIM应用(I)", "在线服务(S)", "帮助(H)", "版本号(B)"];
    return html`<div class="desk">
      <div class="main">
        <div class="title"><span>${t("软件 GGJ2013 - [D:\\预结算及抽筋\\广联达抽筋\\测试-1.GGJ12]")}</span>${winBtns("")}</div>
        <div class="menu">
          ${menu.map((m) => html`<span>${t(m)}</span>`)}
          <svg class="hat" viewBox="0 0 16 16"><circle cx="8" cy="9" r="7" fill="#8a5a40"/><path d="M1 8a7 7 0 0 1 14 0z" fill="#f0c020"/><circle cx="5.500" cy="11" r="1.200" fill="#222"/><circle cx="10.500" cy="11" r="1.200" fill="#222"/></svg>
          <span class="login">登录</span>
        </div>
        <div class="tb tb1">
          <div class="tool on">${I.draw}<span>绘图</span></div>
          <span class="sigma">Σ</span><span class="on">汇总计算</span>
          ${dis(I.align, "平齐板顶")}${dis(I.find, "查找图元")}${dis(I.view, "查看钢筋量")}${dis(I.batch, "批量选择")}${dis(I.three, "钢筋三维")}${dis(I.lock, "锁定")}
          <span class="more first">»</span>
          <div class="combo"><i></i>二维<span class="caret dim"></span></div>
          <div class="tool">${I.cube}<span>俯视</span><span class="caret dim"></span></div>
          ${dis(I.orbit, "动态观察")}${dis(I.local, "局部三维")}<span class="sep"></span>${dis(I.zoom, "全屏")}
          <span class="more last">»</span>
        </div>
        <div class="tb tb2">
          <span class="collapse"></span>
          ${on(I.add, "新建", true)}<span class="gap8"></span>
          ${on(I.del, "删除")}<span class="gap8"></span>
          ${on(I.copy, "复制")}<span class="gap7"></span>
          ${on(I.rename, "重命名")}<span class="gap8"></span>
          <span class="sep"></span><span class="gap2"></span>
          <span>楼层</span>
          <div class="floor">基础层<span class="caret"></span></div>
          <span class="sep"></span><span class="gap4"></span>
          ${on(I.az, "排序", true)}<span class="gap8"></span>
          ${on(I.filter, "过滤", true)}<span class="gap6"></span>
          <span class="sep"></span><span class="gap4"></span>
          ${on(I.cpfrom, "从其他楼层复制构件")}<span class="gap8"></span>
          ${on(I.cpfrom, "复制构件到其他楼层")}<span class="gap8"></span>
          <span class="sep"></span><span class="gap8"></span>
          ${on("", "查找", true)}<span class="gap7"></span>
          <span class="sep"></span><span class="gap8"></span>
          <div class="tool gray">${I.up}<span class="gap2"></span><span>上移</span></div><span class="gap9"></span>
          <div class="tool gray">${I.down}<span class="gap2"></span><span>下移</span></div>
        </div>
        <div class="body">
          <div class="strip"></div>
          <div class="side">
            <div class="search"><div class="box">搜索构件...</div>
              <svg viewBox="0 0 16 16"><circle cx="9.500" cy="6.500" r="4.500" fill="#eaf4fc" stroke="#4a8ac8" stroke-width="2"/><path d="M6 10l-4 4" stroke="#3a7ab8" stroke-width="2.600"/></svg>
            </div>
            ${this.tree()}
          </div>
          <div class="pane">
            <div class="tabs"><div class="tab">属性编辑</div></div>
            <div class="paneBody">${this.props()}</div>
          </div>
        </div>
      </div>

      <div class="param">
        <div class="ptitle">参数图</div>
        <div class="popts"><span class="radio on"></span>角度放坡形式<span class="gap"></span><span class="radio"></span>底宽放坡形式</div>
        ${this.drawing()}
        <div class="prest"></div>
      </div>

      ${this.browser()}

      <div class="dlg">
        <div class="dtitle">
          <svg class="ico" viewBox="0 0 15 15"><rect width="15" height="15" rx="3" fill="#3a8ae8"/><path d="M7.500 2v11M2 7.500h11" stroke="#fff" stroke-width="2"/></svg>
          编辑其它钢筋${winBtns("hot")}
        </div>
        <div class="dbar">其它钢筋列表:</div>
        <div class="dbody">
          <table class="gridT">
            <tr class="hd"><th></th><th class="act">筋号</th><th>钢筋信息</th><th>图号</th><th>钢筋图形</th><th>根数</th><th>${t("长度(mm)")}</th></tr>
            <tr class="r1"><td class="n on">${t("1")}</td><td class="v act2">${t("1")}</td><td class="v">${t("Φ20")}</td><td class="v">${t("1")}</td>
              <td><div class="shape"><span class="len">${t("4700")}</span><span class="bar"></span></div></td><td class="v">${t("20")}</td><td class="v">${t("4700")}</td></tr>
            <tr class="r2"><td class="n">${t("2")}</td><td></td><td></td><td></td><td></td><td></td><td></td></tr>
          </table>
        </div>
      </div>

      <svg class="arrows" viewBox="0 0 1432 789">
        ${arrow(1257, 455, 323, 276)}
        ${arrow(1355, 456, 875, 319)}
        ${arrow(1285, 428, 879, 250)}
        ${arrow(273, 278, 226, 463)}
      </svg>
    </div>`;
  }
}
